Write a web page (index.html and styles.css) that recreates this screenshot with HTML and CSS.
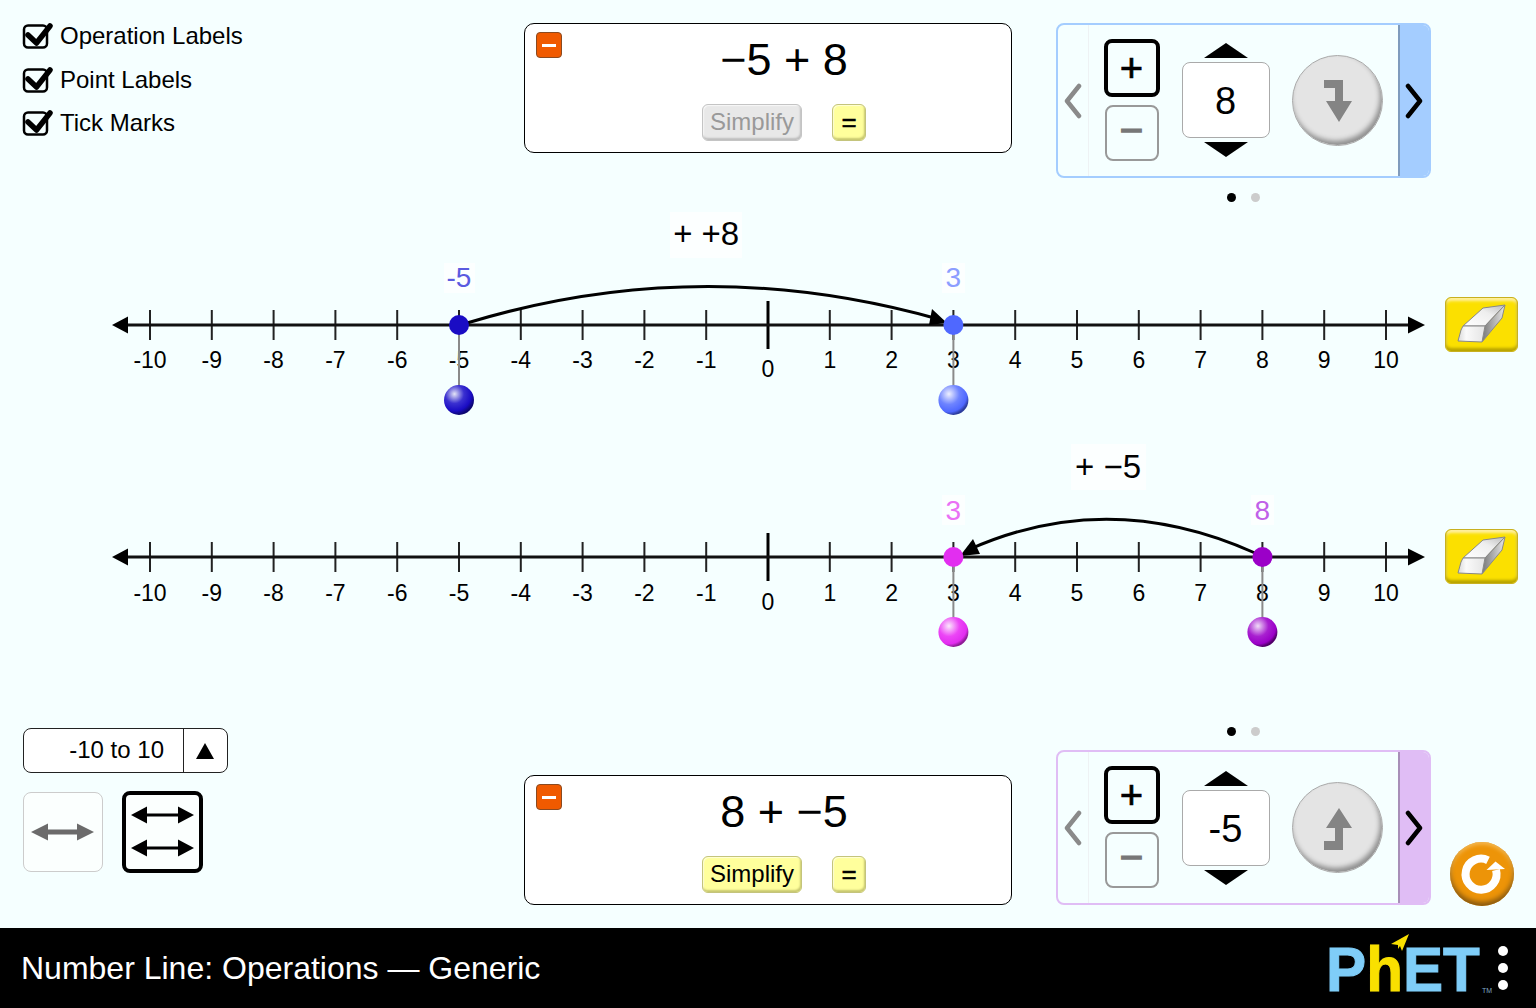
FILE: index.html
```html
<!DOCTYPE html>
<html lang="en">
<head>
    <meta charset="UTF-8">
    <title>Number Line: Operations</title>
    <link rel="stylesheet" href="styles.css">
</head>
<body>

    <svg class="defs" width="0" height="0" aria-hidden="true">
        <defs>
            <radialGradient id="ball-navy" cx="35%" cy="30%" r="70%">
                <stop offset="0" stop-color="#e4e4f6"/><stop offset=".45" stop-color="#3a30d0"/><stop offset=".8" stop-color="#1a0cc4"/><stop offset="1" stop-color="#0c0670"/>
            </radialGradient>
            <radialGradient id="ball-blue" cx="35%" cy="30%" r="70%">
                <stop offset="0" stop-color="#eef0ff"/><stop offset=".5" stop-color="#6e84ff"/><stop offset=".85" stop-color="#4f68ff"/><stop offset="1" stop-color="#2c3c9c"/>
            </radialGradient>
            <radialGradient id="ball-pink" cx="35%" cy="30%" r="70%">
                <stop offset="0" stop-color="#fbe8fc"/><stop offset=".5" stop-color="#ec45f6"/><stop offset=".85" stop-color="#e22ef0"/><stop offset="1" stop-color="#8e1c96"/>
            </radialGradient>
            <radialGradient id="ball-purple" cx="35%" cy="30%" r="70%">
                <stop offset="0" stop-color="#f0dcf8"/><stop offset=".5" stop-color="#a820d0"/><stop offset=".85" stop-color="#9b00c8"/><stop offset="1" stop-color="#500068"/>
            </radialGradient>
            <linearGradient id="eraser-top" x1="0" y1="1" x2="1" y2="0">
                <stop offset="0" stop-color="#fff"/><stop offset=".6" stop-color="#eee"/><stop offset="1" stop-color="#bbb"/>
            </linearGradient>
            <linearGradient id="eraser-front" x1="0" y1="0" x2="1" y2="0">
                <stop offset="0" stop-color="#d8d8d8"/><stop offset=".3" stop-color="#fafafa"/><stop offset="1" stop-color="#e4e4e4"/>
            </linearGradient>
            <linearGradient id="eraser-side" x1="0" y1="0" x2="1" y2="0">
                <stop offset="0" stop-color="#777"/><stop offset="1" stop-color="#e8e8e8"/>
            </linearGradient>
            <g id="eraser-shape">
                <path d="M18 29 38 11 60 8 40 29z" fill="url(#eraser-top)" stroke="#888" stroke-linejoin="round"/>
                <path d="M40 29 60 8 57 21 37 45z" fill="url(#eraser-side)" stroke="#888" stroke-linejoin="round"/>
                <path d="M18 29H40L37 45 13 44 16 33z" fill="url(#eraser-front)" stroke="#888" stroke-linejoin="round"/>
            </g>
            <g id="chevron-left"><path d="M15 3 3 18 15 33" fill="none" stroke="#8a8a8a" stroke-width="4.500" stroke-linecap="round" stroke-linejoin="round"/></g>
            <g id="chevron-right"><path d="M3 3 15 18 3 33" fill="none" stroke="#000" stroke-width="4.500" stroke-linecap="round" stroke-linejoin="round"/></g>
        </defs>
    </svg>

    <main>
        <section class="row-top">
            <div class="checks">
                <label class="check">
                    <svg class="check-icon" viewBox="0 0 32 28"><rect x="2" y="3.500" width="23" height="22" rx="4" fill="none" stroke="#000" stroke-width="2.500"/><path d="M6 13 14.500 21 28 4" fill="none" stroke="#000" stroke-width="5.500" stroke-linecap="round" stroke-linejoin="round"/></svg>
                    Operation Labels
                </label>
                <label class="check">
                    <svg class="check-icon" viewBox="0 0 32 28"><rect x="2" y="3.500" width="23" height="22" rx="4" fill="none" stroke="#000" stroke-width="2.500"/><path d="M6 13 14.500 21 28 4" fill="none" stroke="#000" stroke-width="5.500" stroke-linecap="round" stroke-linejoin="round"/></svg>
                    Point Labels
                </label>
                <label class="check">
                    <svg class="check-icon" viewBox="0 0 32 28"><rect x="2" y="3.500" width="23" height="22" rx="4" fill="none" stroke="#000" stroke-width="2.500"/><path d="M6 13 14.500 21 28 4" fill="none" stroke="#000" stroke-width="5.500" stroke-linecap="round" stroke-linejoin="round"/></svg>
                    Tick Marks
                </label>
            </div>

            <div class="eq-card">
                <span class="eq-toggle"></span>
                <div class="eq-text">−5 + 8</div>
                <div class="eq-buttons">
                    <span class="btn-simplify off">Simplify</span>
                    <span class="btn-equals">=</span>
                </div>
            </div>

            <div class="carousel-wrap">
                <div class="carousel blue">
                    <div class="side-left"><svg width="18" height="36"><use href="#chevron-left"/></svg></div>
                    <div class="sign-btns">
                        <span class="sign on">+</span>
                        <span class="sign">−</span>
                    </div>
                    <div class="spinner">
                        <span class="tri-up"></span>
                        <span class="spin-value">8</span>
                        <span class="tri-down"></span>
                    </div>
                    <div class="go-btn">
                        <svg width="90" height="90" viewBox="0 0 90 90"><path d="M31 24H50V45H59L46 66 33 45H42V32H31z" fill="#848484"/></svg>
                    </div>
                    <div class="side-right"><svg width="18" height="36"><use href="#chevron-right"/></svg></div>
                </div>
                <div class="dots"><i class="on"></i><i></i></div>
            </div>
        </section>

        <section class="line-row">
            <svg class="line" viewBox="0 204 1445 232">
                <g class="ticks">
                    <path d="M150 310v30M211.800 310v30M273.600 310v30M335.400 310v30M397.200 310v30M459 310v30M520.800 310v30M582.600 310v30M644.400 310v30M706.200 310v30M829.800 310v30M891.600 310v30M953.400 310v30M1015.200 310v30M1077 310v30M1138.800 310v30M1200.600 310v30M1262.400 310v30M1324.200 310v30M1386 310v30"/>
                </g>
                <path class="zero-tick" d="M768 301v48"/>
                <path class="axis" d="M124 325H1412"/>
                <path d="M112 325 128 316.500V333.500z M1425 325 1408 316.500V333.500z"/>
                <g class="nums">
                    <text x="150" y="368">-10</text><text x="211.800" y="368">-9</text><text x="273.600" y="368">-8</text><text x="335.400" y="368">-7</text><text x="397.200" y="368">-6</text><text x="459" y="368">-5</text><text x="520.800" y="368">-4</text><text x="582.600" y="368">-3</text><text x="644.400" y="368">-2</text><text x="706.200" y="368">-1</text><text x="768" y="377">0</text><text x="829.800" y="368">1</text><text x="891.600" y="368">2</text><text x="953.400" y="368">3</text><text x="1015.200" y="368">4</text><text x="1077" y="368">5</text><text x="1138.800" y="368">6</text><text x="1200.600" y="368">7</text><text x="1262.400" y="368">8</text><text x="1324.200" y="368">9</text><text x="1386" y="368">10</text>
                </g>
                <path class="stem" d="M459 325V390M953.400 325V390"/>
                <path class="arc" d="M467 323Q700 252 938 319"/>
                <path d="M947 323 932 309 929 325z"/>
                <circle cx="459" cy="325" r="10" fill="#1a0cc4"/>
                <circle cx="953.400" cy="325" r="10" fill="#4f68ff"/>
                <circle cx="459" cy="400" r="15" fill="url(#ball-navy)"/>
                <circle cx="953.400" cy="400" r="15" fill="url(#ball-blue)"/>
                <rect class="tag" x="444" y="263" width="31" height="30"/>
                <text class="pt-label" x="459" y="286.500" fill="#5b5be0">-5</text>
                <rect class="tag" x="942" y="263" width="23" height="30"/>
                <text class="pt-label" x="953.400" y="286.500" fill="#8c9eff">3</text>
                <rect class="tag" x="670" y="212" width="72" height="46"/>
                <text class="op-label" x="706.200" y="245">+ +8</text>
            </svg>
            <div class="eraser"><svg width="73" height="55"><use href="#eraser-shape"/></svg></div>
        </section>

        <section class="line-row">
            <svg class="line" viewBox="0 204 1445 232">
                <g class="ticks">
                    <path d="M150 310v30M211.800 310v30M273.600 310v30M335.400 310v30M397.200 310v30M459 310v30M520.800 310v30M582.600 310v30M644.400 310v30M706.200 310v30M829.800 310v30M891.600 310v30M953.400 310v30M1015.200 310v30M1077 310v30M1138.800 310v30M1200.600 310v30M1262.400 310v30M1324.200 310v30M1386 310v30"/>
                </g>
                <path class="zero-tick" d="M768 301v48"/>
                <path class="axis" d="M124 325H1412"/>
                <path d="M112 325 128 316.500V333.500z M1425 325 1408 316.500V333.500z"/>
                <g class="nums">
                    <text x="150" y="369">-10</text><text x="211.800" y="369">-9</text><text x="273.600" y="369">-8</text><text x="335.400" y="369">-7</text><text x="397.200" y="369">-6</text><text x="459" y="369">-5</text><text x="520.800" y="369">-4</text><text x="582.600" y="369">-3</text><text x="644.400" y="369">-2</text><text x="706.200" y="369">-1</text><text x="768" y="378">0</text><text x="829.800" y="369">1</text><text x="891.600" y="369">2</text><text x="953.400" y="369">3</text><text x="1015.200" y="369">4</text><text x="1077" y="369">5</text><text x="1138.800" y="369">6</text><text x="1200.600" y="369">7</text><text x="1262.400" y="369">8</text><text x="1324.200" y="369">9</text><text x="1386" y="369">10</text>
                </g>
                <path class="stem" d="M953.400 325V390M1262.400 325V390"/>
                <path class="arc" d="M1255 321Q1108 255 968 318"/>
                <path d="M960 324 973 307 980 322z"/>
                <circle cx="953.400" cy="325" r="10" fill="#e22ef0"/>
                <circle cx="1262.400" cy="325" r="10" fill="#9b00c8"/>
                <circle cx="953.400" cy="400" r="15" fill="url(#ball-pink)"/>
                <circle cx="1262.400" cy="400" r="15" fill="url(#ball-purple)"/>
                <rect class="tag" x="942" y="263" width="23" height="30"/>
                <text class="pt-label" x="953.400" y="287.500" fill="#ea70f5">3</text>
                <rect class="tag" x="1251" y="263" width="23" height="30"/>
                <text class="pt-label" x="1262.400" y="287.500" fill="#c060e8">8</text>
                <rect class="tag" x="1071" y="212" width="75" height="46"/>
                <text class="op-label" x="1108" y="246">+ −5</text>
            </svg>
            <div class="eraser"><svg width="73" height="55"><use href="#eraser-shape"/></svg></div>
        </section>

        <section class="row-bottom">
            <div class="range-col">
                <div class="range-box">
                    <span class="range-value">-10 to 10</span>
                    <span class="range-arrow"><i></i></span>
                </div>
                <div class="view-btns">
                    <span class="view-btn">
                        <svg width="64" height="24" viewBox="0 0 64 24"><path d="M0 12 17 3.500V9.500H46V3.500L63 12 46 20.500V14.500H17V20.500z" fill="#6b6b6b"/></svg>
                    </span>
                    <span class="view-btn on">
                        <svg width="64" height="56" viewBox="0 0 64 56"><path d="M0 11 16 2.500V9.500H47V2.500L63 11 47 19.500V12.500H16V19.500z"/><path d="M0 44 16 35.500V42.500H47V35.500L63 44 47 52.500V45.500H16V52.500z"/></svg>
                    </span>
                </div>
            </div>

            <div class="eq-card">
                <span class="eq-toggle"></span>
                <div class="eq-text">8 + −5</div>
                <div class="eq-buttons">
                    <span class="btn-simplify">Simplify</span>
                    <span class="btn-equals">=</span>
                </div>
            </div>

            <div class="carousel-wrap">
                <div class="dots top"><i class="on"></i><i></i></div>
                <div class="carousel purple">
                    <div class="side-left"><svg width="18" height="36"><use href="#chevron-left"/></svg></div>
                    <div class="sign-btns">
                        <span class="sign on">+</span>
                        <span class="sign">−</span>
                    </div>
                    <div class="spinner">
                        <span class="tri-up"></span>
                        <span class="spin-value">-5</span>
                        <span class="tri-down"></span>
                    </div>
                    <div class="go-btn">
                        <svg width="90" height="90" viewBox="0 0 90 90"><path d="M46 25 59 45H50V67H31V58H42V45H33z" fill="#848484"/></svg>
                    </div>
                    <div class="side-right"><svg width="18" height="36"><use href="#chevron-right"/></svg></div>
                </div>
            </div>

            <div class="reset">
                <svg width="64" height="64" viewBox="0 0 64 64"><path d="M38 18.300A15.500 15.500 0 1 0 46 28" fill="none" stroke="#fff" stroke-width="8"/><path d="M36.500 28 45.500 19.500 55 27z" fill="#fff"/></svg>
            </div>
        </section>
    </main>

    <footer>
        <div class="title">Number Line: Operations — Generic</div>
        <div class="logo">
            <div class="logo-word"><span>P</span><span class="logo-h">h</span><span>E</span><span>T</span></div>
            <svg class="plane" width="18" height="17" viewBox="0 0 18 17"><path d="M0 10 18 0 11 17 9 12 7 15V11z" fill="#f9e000"/></svg>
            <span class="logo-tm">TM</span>
        </div>
        <div class="menu"><i></i><i></i><i></i></div>
    </footer>

</body>
</html>
```
FILE: styles.css
```css
*{
    box-sizing:border-box;
    margin:0;
    padding:0;
}

html, body{
    width:1536px;
    height:1008px;
    overflow:hidden;
}

body{
    font-family:"Liberation Sans", Arial, sans-serif;
    background-color:#f5ffff;
    color:#000;
}

.defs{
    display:block;
    height:0;
}

main{
    height:928px;
}

/* top row */

.row-top{
    display:flex;
    height:204px;
    padding:23px 0 0 22px;
}

.checks{
    width:502px;
    margin-top:-3px;
    display:flex;
    flex-direction:column;
    gap:11.500px;
}

.check{
    display:flex;
    align-items:center;
    gap:6px;
    height:32px;
    font-size:24px;
}

.check-icon{
    width:32px;
    height:28px;
}

/* equation card */

.eq-card{
    position:relative;
    width:488px;
    height:130px;
    background-color:#fff;
    border:1.500px solid #000;
    border-radius:10px;
    padding:8px 0 0 32px;
    display:flex;
    flex-direction:column;
    align-items:center;
}

.eq-toggle{
    position:absolute;
    left:11px;
    top:8px;
    width:26px;
    height:26px;
    background-color:#f05a00;
    border:1px solid #8a4a20;
    border-radius:4px;
}

.eq-toggle::after{
    content:"";
    position:absolute;
    left:5px;
    top:10.500px;
    width:14px;
    height:3.500px;
    background-color:#fff;
}

.eq-text{
    font-size:45px;
    line-height:56px;
    white-space:pre;
}

.eq-buttons{
    display:flex;
    gap:30px;
    margin-top:16px;
}

.btn-simplify{
    width:100px;
    height:37px;
    line-height:33px;
    text-align:center;
    font-size:24px;
    background-color:#ffff9c;
    border:1px solid #c4c47c;
    border-radius:6px;
    box-shadow:inset -1px -2px 2px #c8c870, inset 1px 1px 1px #ffffd8;
}

.btn-simplify.off{
    background-color:#e8e8e8;
    border-color:#c4c4c4;
    box-shadow:inset -1px -2px 2px #bdbdbd, inset 1px 1px 1px #f8f8f8;
    color:#999;
}

.btn-equals{
    width:34px;
    height:37px;
    line-height:35px;
    text-align:center;
    font-size:26px;
    -webkit-text-stroke:.5px #000;
    background-color:#ffff9c;
    border:1px solid #c4c47c;
    border-radius:6px;
    box-shadow:inset -1px -2px 2px #c8c870, inset 1px 1px 1px #ffffd8;
}

/* carousel */

.carousel-wrap{
    margin-left:44px;
    width:375px;
}

.carousel{
    display:flex;
    height:155px;
    border:2px solid;
    border-radius:8px;
    overflow:hidden;
    align-items:center;
}

.carousel.blue{
    border-color:#a4cdff;
}

.carousel.purple{
    border-color:#e0bdf5;
}

.side-left{
    width:31px;
    height:100%;
    border-right:1px solid #eef2f4;
    display:flex;
    align-items:center;
    justify-content:center;
}

.side-right{
    width:32px;
    height:100%;
    margin-left:15px;
    border-left:2px solid;
    display:flex;
    align-items:center;
    justify-content:center;
}

.blue .side-right{
    background-color:#a4cdff;
    border-color:#7f9bbd;
}

.purple .side-right{
    background-color:#e0bdf5;
    border-color:#a78fb8;
}

.sign-btns{
    margin-left:15px;
    margin-bottom:2px;
    width:56px;
    display:flex;
    flex-direction:column;
    align-items:center;
    gap:8px;
}

.sign{
    width:54px;
    height:56px;
    line-height:47px;
    text-align:center;
    font-size:40px;
    color:#777;
    -webkit-text-stroke:1.500px #777;
    border:2px solid #999;
    border-radius:8px;
}

.sign.on{
    width:56px;
    height:58px;
    line-height:50px;
    color:#000;
    -webkit-text-stroke:.7px #000;
    border:4px solid #000;
}

.spinner{
    margin-left:22px;
    margin-bottom:2px;
    width:88px;
    display:flex;
    flex-direction:column;
    align-items:center;
    gap:4px;
}

.purple .spinner{
    margin-bottom:0;
}

.tri-up{
    width:0;
    height:0;
    border-left:22px solid transparent;
    border-right:22px solid transparent;
    border-bottom:15px solid #000;
}

.tri-down{
    width:0;
    height:0;
    border-left:22px solid transparent;
    border-right:22px solid transparent;
    border-top:15px solid #000;
}

.spin-value{
    width:88px;
    height:76px;
    line-height:76px;
    text-align:center;
    font-size:38px;
    background-color:#fff;
    border:1px solid #aaa;
    border-radius:8px;
}

.go-btn{
    margin-left:22px;
    width:91px;
    height:91px;
    border-radius:50%;
    background-color:#e4e4e4;
    border:1px solid #aaa;
    box-shadow:inset -2px -4px 5px #8f8f8f;
}

.go-btn svg{
    display:block;
}

.dots{
    display:flex;
    justify-content:center;
    gap:15px;
    margin-top:15px;
}

.dots.top{
    margin-top:0;
    height:16px;
    margin-bottom:7px;
}

.dots i{
    width:9px;
    height:9px;
    border-radius:50%;
    background-color:#ccc;
}

.dots i.on{
    background-color:#000;
}

/* number lines */

.line-row{
    display:flex;
    height:232px;
}

.line{
    display:block;
    width:1445px;
    height:232px;
}

.ticks path{
    stroke:#222;
    stroke-width:2;
    fill:none;
}

.zero-tick{
    stroke:#000;
    stroke-width:3;
}

.axis{
    stroke:#111;
    stroke-width:3;
}

.nums text{
    font-size:23px;
    text-anchor:middle;
}

.stem{
    stroke:#8a8a8a;
    stroke-width:2;
    fill:none;
}

.arc{
    stroke:#000;
    stroke-width:3;
    fill:none;
}

.tag{
    fill:#fff;
    fill-opacity:.7;
}

.pt-label{
    font-size:28px;
    text-anchor:middle;
}

.op-label{
    font-size:33px;
    text-anchor:middle;
}

.eraser{
    margin-top:93px;
    width:73px;
    height:55px;
    background-color:#fbe000;
    border:1px solid #c8b020;
    border-radius:6px;
    box-shadow:inset 0 -3px 3px #b8a400, inset 0 3px 3px #fff0a0;
}

.eraser svg{
    display:block;
    margin:-1px;
}

/* bottom row */

.row-bottom{
    position:relative;
    display:flex;
    height:260px;
    padding:60px 0 0 23px;
}

.range-col{
    width:501px;
}

.range-box{
    display:flex;
    width:205px;
    height:45px;
    background-color:#fff;
    border:1.500px solid #222;
    border-radius:8px;
}

.range-value{
    width:160px;
    line-height:42px;
    font-size:24px;
    text-align:right;
    padding-right:19px;
    border-right:1.500px solid #222;
}

.range-arrow{
    flex:1;
    display:flex;
    align-items:center;
    justify-content:center;
    padding-right:2px;
}

.range-arrow i{
    width:0;
    height:0;
    border-left:9px solid transparent;
    border-right:9px solid transparent;
    border-bottom:16px solid #000;
}

.view-btns{
    display:flex;
    align-items:center;
    gap:19px;
    margin-top:18px;
}

.view-btn{
    width:80px;
    height:80px;
    display:flex;
    align-items:center;
    justify-content:center;
    background-color:#fbfffe;
    border:1.500px solid #ccc;
    border-radius:8px;
}

.view-btn.on{
    width:81px;
    height:82px;
    border:4px solid #000;
}

.row-bottom .eq-card{
    margin-top:47px;
}

.row-bottom .carousel-wrap{
    margin-top:-1px;
}

.reset{
    position:absolute;
    left:1450px;
    top:174px;
    width:64px;
    height:64px;
    border-radius:50%;
    background-color:#ed9408;
    box-shadow:inset 0 -4px 5px #8a5a10, inset 0 2px 4px #f8c060;
}

.reset svg{
    display:block;
}

/* footer */

footer{
    height:80px;
    background-color:#000;
    color:#fff;
    display:flex;
    align-items:center;
    padding-left:21px;
}

.title{
    font-size:32px;
}

.logo{
    position:relative;
    width:155px;
    margin-left:auto;
    padding-top:2px;
}

.logo-word{
    font-size:63px;
    font-weight:bold;
    line-height:70px;
    white-space:nowrap;
    color:#7fcdf8;
    -webkit-text-stroke:1px #7fcdf8;
    transform:scaleX(.955);
    transform-origin:left;
}

.logo-h{
    color:#f9e000;
    -webkit-text-stroke:1px #f9e000;
}

.logo-tm{
    position:absolute;
    left:156px;
    bottom:9px;
    font-size:7px;
    line-height:8px;
    color:#7fa9c4;
}

.plane{
    position:absolute;
    left:65px;
    top:2px;
}

.menu{
    display:flex;
    flex-direction:column;
    gap:7px;
    margin:0 28px 0 17px;
}

.menu i{
    width:10px;
    height:10px;
    border-radius:50%;
    background-color:#fff;
}
```
